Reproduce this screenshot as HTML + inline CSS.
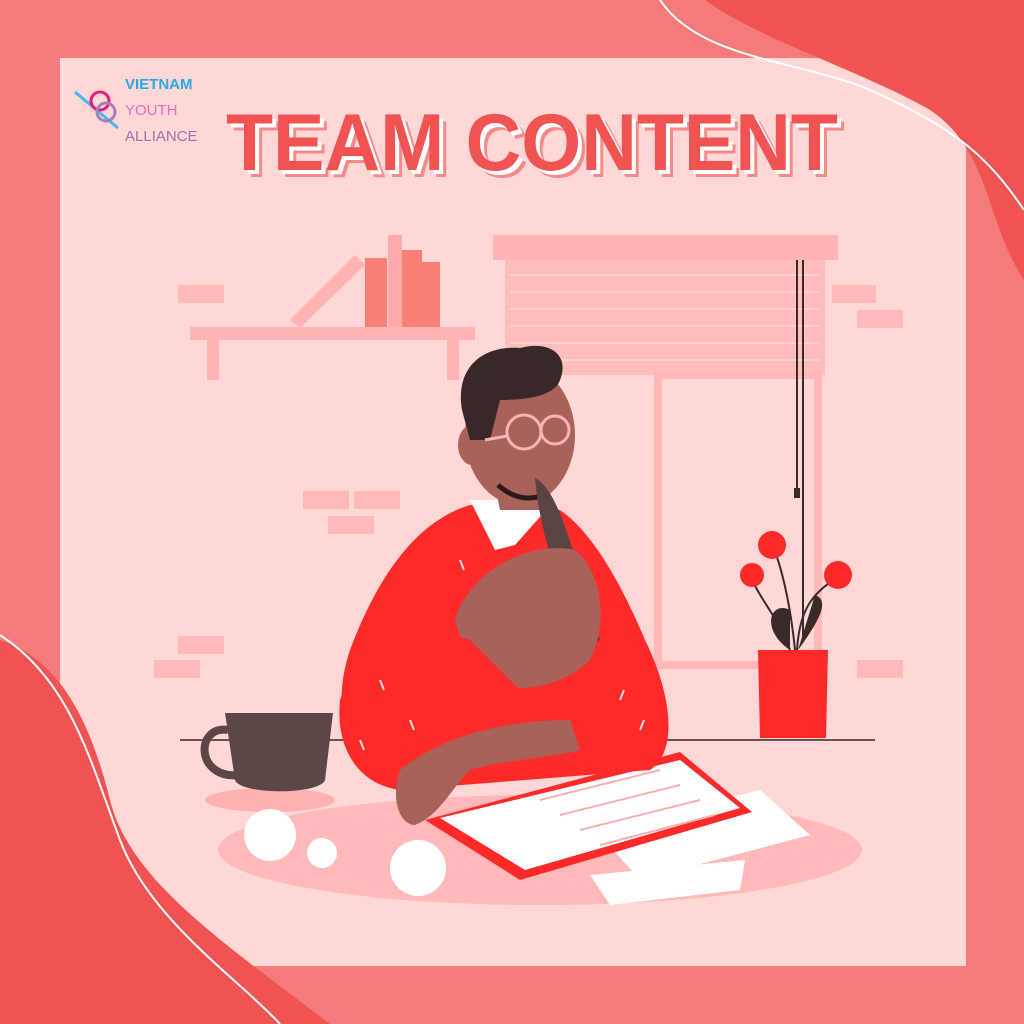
<!DOCTYPE html>
<html><head><meta charset="utf-8"><style>
html,body{margin:0;padding:0;width:1024px;height:1024px;overflow:hidden;background:#f57b7b}
svg{display:block}
</style></head><body>
<svg width="1024" height="1024" viewBox="0 0 1024 1024" xmlns="http://www.w3.org/2000/svg">
<rect width="1024" height="1024" fill="#f57b7b"/>
<rect x="60" y="58" width="906" height="908" fill="#ffd7d7"/>
<!-- blobs -->
<path d="M705 0 C760 40 860 70 930 110 C990 150 985 220 1024 280 L1024 0 Z" fill="#ef5352"/>
<path d="M660 0 C700 60 800 60 870 90 C960 130 990 160 1024 210" fill="none" stroke="#fff" stroke-width="2"/>
<path d="M0 640 C60 660 90 720 110 800 C130 880 220 940 330 1024 L0 1024 Z" fill="#ef5352"/>
<path d="M0 635 C70 680 90 760 120 840 C150 920 240 980 280 1024" fill="none" stroke="#fff" stroke-width="2"/>
<!-- wall bricks -->
<g fill="#ffb9b9">
<rect x="178" y="285" width="46" height="18"/><rect x="832" y="285" width="44" height="18"/><rect x="857" y="310" width="46" height="18"/>
<rect x="303" y="491" width="46" height="18"/><rect x="354" y="491" width="46" height="18"/><rect x="328" y="516" width="46" height="18"/>
<rect x="178" y="636" width="46" height="18"/><rect x="154" y="660" width="46" height="18"/><rect x="857" y="660" width="46" height="18"/>
</g>
<!-- window -->
<rect x="493" y="235" width="345" height="25" fill="#ffb3b3"/>
<rect x="505" y="260" width="320" height="115" fill="#ffbcbc"/>
<g stroke="#ffd0d0" stroke-width="2"><line x1="510" y1="275" x2="820" y2="275"/><line x1="510" y1="292" x2="820" y2="292"/><line x1="510" y1="309" x2="820" y2="309"/><line x1="510" y1="326" x2="820" y2="326"/><line x1="510" y1="343" x2="820" y2="343"/><line x1="510" y1="360" x2="820" y2="360"/></g>
<rect x="658" y="375" width="160" height="290" fill="none" stroke="#ffb8b8" stroke-width="8"/>
<line x1="797" y1="260" x2="797" y2="490" stroke="#3a2a2a" stroke-width="2"/><line x1="803" y1="260" x2="803" y2="640" stroke="#3a2a2a" stroke-width="2"/>
<rect x="794" y="488" width="6" height="10" fill="#3a2a2a"/>
<!-- shelf -->
<rect x="190" y="327" width="285" height="13" fill="#ffb3b3"/>
<rect x="207" y="340" width="12" height="40" fill="#ffb3b3"/><rect x="447" y="340" width="12" height="40" fill="#ffb3b3"/>
<path d="M290 320 L355 255 L365 265 L300 328 Z" fill="#ffb3b3"/>
<rect x="365" y="258" width="22" height="69" fill="#f88078"/>
<rect x="388" y="235" width="14" height="92" fill="#ffaaaa"/>
<rect x="402" y="250" width="20" height="77" fill="#f88078"/>
<rect x="422" y="262" width="18" height="65" fill="#f88078"/>
<!-- floor -->
<ellipse cx="540" cy="850" rx="322" ry="55" fill="#ffb9b9"/>
<line x1="180" y1="740" x2="875" y2="740" stroke="#6a5252" stroke-width="2"/>
<!-- cup -->
<ellipse cx="270" cy="800" rx="65" ry="12" fill="#ffb0b0"/>
<path d="M225 713 L333 713 L325 780 C320 795 240 795 235 780 Z" fill="#5c4646"/>
<path d="M228 730 C195 725 195 780 240 775" fill="none" stroke="#5c4646" stroke-width="8"/>
<!-- paper balls -->
<circle cx="270" cy="835" r="26" fill="#fff"/><circle cx="322" cy="853" r="15" fill="#fff"/><circle cx="418" cy="868" r="28" fill="#fff"/>
<!-- plant -->
<path d="M795 650 C790 600 780 560 770 540 M797 650 C800 600 820 590 840 575 M790 650 C780 620 760 600 750 575" stroke="#3a2a2a" stroke-width="2" fill="none"/>
<path d="M790 650 C760 630 770 600 790 610 Z M798 650 C820 620 830 600 815 595 Z" fill="#3a2a2a"/>
<g fill="#fe2a2a"><circle cx="772" cy="545" r="14"/><circle cx="838" cy="575" r="14"/><circle cx="752" cy="575" r="12"/></g>
<path d="M758 650 L828 650 L826 738 L760 738 Z" fill="#fe2a2a"/>
<!-- papers -->
<path d="M595 830 L760 790 L810 835 L640 880 Z" fill="#fff"/>
<path d="M590 875 L745 860 L740 890 L610 905 Z" fill="#fff"/>
<path d="M425 820 L680 752 L752 812 L520 880 Z" fill="#fe2a2a"/>
<path d="M440 818 L680 760 L740 808 L525 870 Z" fill="#fff"/>
<g stroke="#f5b0b0" stroke-width="2"><line x1="540" y1="800" x2="660" y2="770"/><line x1="560" y1="815" x2="680" y2="785"/><line x1="580" y1="830" x2="700" y2="800"/><line x1="600" y1="845" x2="715" y2="815"/></g>
<!-- person body -->
<path d="M470 505 C420 520 380 570 350 650 C330 710 345 770 400 790 L650 770 C680 750 670 690 645 640 C620 580 590 530 560 510 Z" fill="#fe2a2a"/>
<path d="M470 500 L495 550 L515 545 L555 500 Z" fill="#fff"/>
<!-- neck/head -->
<path d="M490 460 L500 510 L545 510 L550 460 Z" fill="#a8625a"/>
<ellipse cx="520" cy="435" rx="55" ry="70" fill="#a8625a"/>
<ellipse cx="472" cy="445" rx="14" ry="20" fill="#a8625a"/>
<path d="M462 410 C455 370 480 345 520 348 C550 340 570 355 560 380 C555 395 530 400 500 400 L490 440 L470 440 Z" fill="#3a2828"/>
<circle cx="524" cy="432" r="17" fill="none" stroke="#f4b6b6" stroke-width="3"/>
<circle cx="555" cy="430" r="14" fill="none" stroke="#f4b6b6" stroke-width="3"/>
<line x1="485" y1="440" x2="507" y2="436" stroke="#f4b6b6" stroke-width="3"/>
<path d="M498 485 C515 500 530 500 545 495" stroke="#2a1a1a" stroke-width="5" fill="none"/>
<!-- pen and hand -->
<path d="M535 478 C560 490 575 560 600 640 L585 648 C565 600 540 540 535 478 Z" fill="#5d4444"/>
<path d="M455 620 C470 570 530 540 575 550 C600 570 610 620 590 660 C560 690 500 700 470 670 Z" fill="#a8625a"/>
<!-- arms -->
<path d="M340 700 C360 640 450 630 470 640 L560 730 L520 770 L400 790 C360 785 335 750 340 700 Z" fill="#fe2a2a"/>
<path d="M400 770 C390 800 400 825 415 825 C440 815 450 790 470 770 C500 760 540 760 580 750 L570 720 C520 720 450 730 400 770 Z" fill="#a8625a"/>
<g stroke="#fff" stroke-width="2" opacity=".85"><line x1="380" y1="680" x2="384" y2="690"/><line x1="410" y1="720" x2="414" y2="730"/><line x1="620" y1="700" x2="624" y2="690"/><line x1="640" y1="730" x2="644" y2="720"/><line x1="460" y1="560" x2="464" y2="570"/><line x1="360" y1="740" x2="364" y2="750"/></g>
<!-- logo -->
<g stroke-width="3" fill="none"><line x1="75" y1="92" x2="118" y2="128" stroke="#48b8e8"/><circle cx="100" cy="101" r="9" stroke="#e0207a"/><circle cx="106" cy="112" r="9" stroke="#a080c0"/></g>
<text x="125" y="89" font-family="Liberation Sans Narrow, Liberation Sans, sans-serif" font-weight="bold" font-size="15" fill="#2aa8e0" transform="scale(1,1)">VIETNAM</text>
<text x="125" y="115" font-family="Liberation Sans Narrow, Liberation Sans, sans-serif" font-size="15" fill="#e070c0">YOUTH</text>
<text x="125" y="141" font-family="Liberation Sans Narrow, Liberation Sans, sans-serif" font-size="15" fill="#a070b0">ALLIANCE</text>
<!-- title -->
<g font-family="Liberation Sans, sans-serif" font-weight="bold" font-size="92">
<text x="0" y="0" fill="#f48a8a" transform="translate(233,177) scale(1.02,0.88)" textLength="600" lengthAdjust="spacingAndGlyphs">TEAM CONTENT</text>
<text x="0" y="0" fill="#fff" transform="translate(230,174) scale(1.02,0.88)" textLength="600" lengthAdjust="spacingAndGlyphs">TEAM CONTENT</text>
<text x="0" y="0" fill="#ef5352" transform="translate(226,170) scale(1.02,0.88)" textLength="600" lengthAdjust="spacingAndGlyphs">TEAM CONTENT</text>
</g>
</svg>
</body></html>
